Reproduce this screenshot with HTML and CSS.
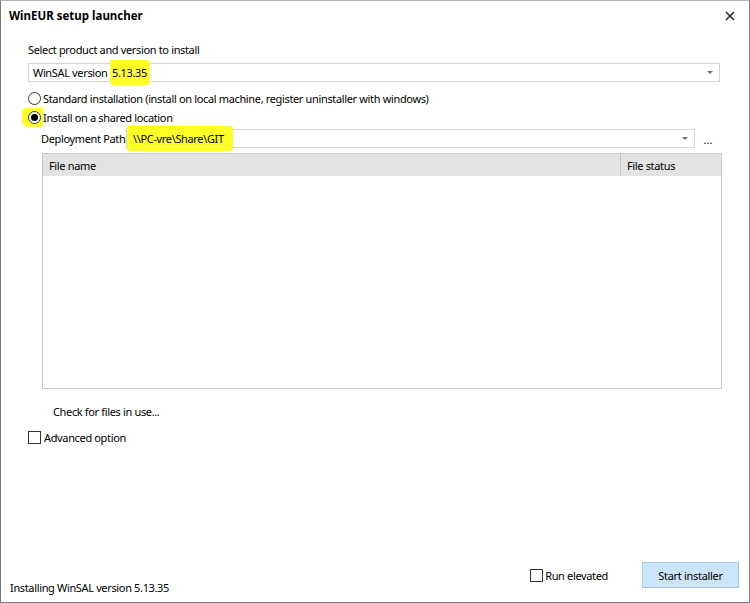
FILE: index.html
```html
<!DOCTYPE html>
<html lang="en">
<head>
<meta charset="UTF-8">
<title>WinEUR setup launcher</title>
<link rel="stylesheet" href="styles.css">
</head>
<body>
<div class="window">
  <div class="titlebar">
    <span class="title">WinEUR setup launcher</span>
    <svg class="close" width="10" height="10" viewBox="0 0 10 10">
      <path d="M1 1 L9 9 M9 1 L1 9" stroke="#2b2b2b" stroke-width="1.6" fill="none"/>
    </svg>
  </div>

  <div class="content">
    <div class="label">Select product and version to install</div>
    <div class="combo product">
      <span class="combo-text">WinSAL version <span class="mark">5.13.35</span></span>
      <span class="arrow"></span>
    </div>

    <div class="option">
      <span class="radio"></span>
      <span>Standard installation (install on local machine, register uninstaller with windows)</span>
    </div>
    <div class="option">
      <span class="radio-mark"><span class="radio"><span class="dot"></span></span></span>
      <span>Install on a shared location</span>
    </div>

    <div class="path-row">
      <span class="path-label">Deployment Path</span>
      <div class="combo path">
        <span class="combo-text"><span class="mark">\\PC-vre\Share\GIT</span></span>
        <span class="arrow"></span>
      </div>
      <span class="browse">...</span>
    </div>

    <div class="filelist">
      <div class="list-head">
        <div class="col name">File name</div>
        <div class="col status">File status</div>
      </div>
      <div class="list-body"></div>
    </div>

    <div class="check-files">Check for files in use...</div>

    <div class="option advanced">
      <span class="checkbox"></span>
      <span>Advanced option</span>
    </div>
  </div>

  <div class="footer">
    <span class="status-text">Installing WinSAL version 5.13.35</span>
    <div class="actions">
      <label class="elevated"><span class="checkbox"></span>Run elevated</label>
      <button class="btn">Start installer</button>
    </div>
  </div>
</div>
</body>
</html>
```

FILE: styles.css
```css
body {
  margin: 0;
  padding: 0;
  background-color: #fff;
  font-family: "Noto Sans", "Liberation Sans", sans-serif;
  font-size: 11px;
  letter-spacing: -0.35px;
  color: #000;
}

.window {
  width: 750px;
  height: 603px;
  box-sizing: border-box;
  border: 1px solid #7a7a7a;
  border-top-color: #b5b5b5;
  background-color: #fff;
  display: flex;
  flex-direction: column;
  white-space: nowrap;
}

.titlebar {
  height: 29px;
  display: flex;
  align-items: center;
  justify-content: space-between;
  padding: 0 14px 0 8px;
}

.title {
  font-weight: bold;
  font-size: 11.5px;
  letter-spacing: 0;
}

.content {
  padding: 0 29px 0 27px;
}

.label {
  margin-top: 12px;
  line-height: 16px;
}

.combo {
  height: 19px;
  box-sizing: border-box;
  border: 1px solid #d3d3d3;
  background-color: #fff;
  display: flex;
  align-items: center;
  justify-content: space-between;
  padding: 0 6px 0 4px;
}

.combo.product {
  margin-top: 5px;
}

.arrow {
  width: 0;
  height: 0;
  border-left: 3px solid transparent;
  border-right: 3px solid transparent;
  border-top: 3px solid #707070;
}

.mark {
  background-color: #ffff26;
  padding: 5px 3px 5px 2px;
  border-radius: 3px;
}

.option {
  display: flex;
  align-items: center;
  height: 16px;
  margin-top: 8px;
  gap: 2px;
}

.option + .option {
  margin-top: 3px;
}

.radio {
  width: 13px;
  height: 13px;
  box-sizing: border-box;
  border: 1px solid #333;
  border-radius: 50%;
  background-color: #fff;
  display: flex;
  align-items: center;
  justify-content: center;
  flex: none;
}

.radio-mark {
  display: flex;
  background-color: #ffff26;
  padding: 3px 2px 3px 6px;
  margin: -3px -2px -3px -6px;
  border-radius: 4px 2px 2px 6px;
}

.dot {
  width: 7px;
  height: 7px;
  border-radius: 50%;
  background-color: #000;
}

.checkbox {
  width: 13px;
  height: 13px;
  box-sizing: border-box;
  border: 1px solid #333;
  background-color: #fff;
  display: inline-block;
  flex: none;
}

.path-row {
  display: flex;
  align-items: center;
  margin-top: 4px;
  padding-left: 13px;
}

.path-label {
  width: 85px;
  flex: none;
}

.combo.path {
  flex: 1;
  padding-left: 0;
}

.combo.path .mark {
  padding-left: 6px;
  padding-right: 9px;
}

.browse {
  width: 24px;
  flex: none;
  text-align: center;
  letter-spacing: 0;
  position: relative;
  top: 1px;
  padding-left: 1px;
}

.filelist {
  margin: 5px -2px 0 14px;
  height: 236px;
  box-sizing: border-box;
  border: 1px solid #c9c9c9;
}

.list-head {
  display: flex;
  height: 22px;
  background-color: #e3e3e3;
}

.col {
  display: flex;
  align-items: center;
  padding-left: 6px;
}

.col.name {
  flex: 1;
  border-right: 1px solid #c6c6c6;
}

.col.status {
  width: 94px;
}

.check-files {
  margin-top: 15px;
  line-height: 16px;
  padding-left: 25px;
}

.option.advanced {
  margin-top: 9px;
  gap: 3px;
}

.footer {
  margin-top: auto;
  display: flex;
  justify-content: space-between;
  align-items: flex-end;
  padding: 0 10px 14px 9px;
}

.status-text {
  line-height: 16px;
  margin-bottom: -8px;
}

.actions {
  display: flex;
  align-items: center;
  gap: 34px;
}

.elevated {
  display: flex;
  align-items: center;
  gap: 2px;
}

.btn {
  width: 97px;
  height: 26px;
  background-color: #cce4f7;
  border: 1px solid #a6c8e6;
  font-family: "Noto Sans", "Liberation Sans", sans-serif;
  font-size: 11px;
  letter-spacing: -0.3px;
  color: #000;
  padding: 0;
}
```
